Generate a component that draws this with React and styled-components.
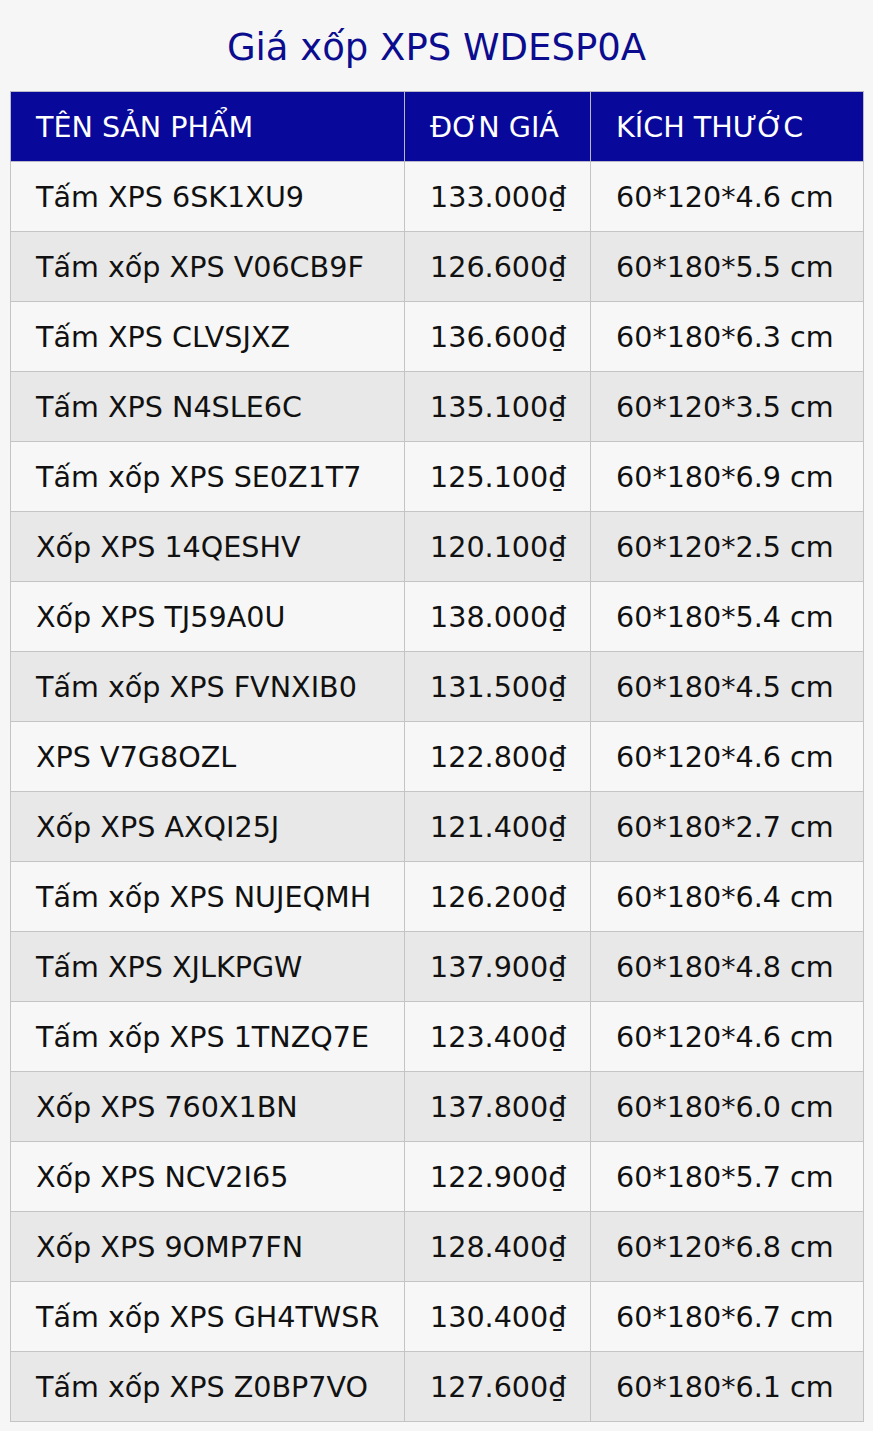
import React from 'react'
import styled, { createGlobalStyle } from 'styled-components'

const GlobalStyle = createGlobalStyle`
  html, body {
    margin: 0;
    padding: 0;
    background: #f6f6f6;
  }
  body {
    font-family: "DejaVu Sans", "Liberation Sans", sans-serif;
  }
`

const Page = styled.div`
  padding: 0 10px 10px 10px;
  min-height: 1431px;
  box-sizing: border-box;
`

const Title = styled.h1`
  margin: 0;
  height: 91px;
  display: flex;
  align-items: center;
  justify-content: center;
  padding-top: 4px;
  box-sizing: border-box;
  font-size: 37px;
  font-weight: normal;
  color: #0c0c8f;
`

const Table = styled.table`
  width: 853px;
  border-collapse: collapse;
  table-layout: fixed;
  font-size: 28.6px;
`

const Head = styled.th`
  background: #08089a;
  color: #fff;
  font-weight: normal;
  text-align: left;
  height: 70px;
  padding: 0 0 0 25px;
  border: 1px solid #b8b8c8;
  box-sizing: border-box;
  white-space: nowrap;
`

const Row = styled.tr`
  background: ${({ odd }) => (odd ? '#e8e8e8' : '#f7f7f7')};
`

const Cell = styled.td`
  height: 70px;
  padding: 0 0 0 25px;
  border: 1px solid #c4c4c4;
  color: #111;
  white-space: nowrap;
  box-sizing: border-box;
`

const rows = [
  ['Tấm XPS 6SK1XU9', '133.000₫', '60*120*4.6 cm'],
  ['Tấm xốp XPS V06CB9F', '126.600₫', '60*180*5.5 cm'],
  ['Tấm XPS CLVSJXZ', '136.600₫', '60*180*6.3 cm'],
  ['Tấm XPS N4SLE6C', '135.100₫', '60*120*3.5 cm'],
  ['Tấm xốp XPS SE0Z1T7', '125.100₫', '60*180*6.9 cm'],
  ['Xốp XPS 14QESHV', '120.100₫', '60*120*2.5 cm'],
  ['Xốp XPS TJ59A0U', '138.000₫', '60*180*5.4 cm'],
  ['Tấm xốp XPS FVNXIB0', '131.500₫', '60*180*4.5 cm'],
  ['XPS V7G8OZL', '122.800₫', '60*120*4.6 cm'],
  ['Xốp XPS AXQI25J', '121.400₫', '60*180*2.7 cm'],
  ['Tấm xốp XPS NUJEQMH', '126.200₫', '60*180*6.4 cm'],
  ['Tấm XPS XJLKPGW', '137.900₫', '60*180*4.8 cm'],
  ['Tấm xốp XPS 1TNZQ7E', '123.400₫', '60*120*4.6 cm'],
  ['Xốp XPS 760X1BN', '137.800₫', '60*180*6.0 cm'],
  ['Xốp XPS NCV2I65', '122.900₫', '60*180*5.7 cm'],
  ['Xốp XPS 9OMP7FN', '128.400₫', '60*120*6.8 cm'],
  ['Tấm xốp XPS GH4TWSR', '130.400₫', '60*180*6.7 cm'],
  ['Tấm xốp XPS Z0BP7VO', '127.600₫', '60*180*6.1 cm'],
]

export default function App() {
  return (
    <>
      <GlobalStyle />
      <Page>
        <Title>Giá xốp XPS WDESP0A</Title>
        <Table>
          <colgroup>
            <col style={{ width: 394 }} />
            <col style={{ width: 186 }} />
            <col style={{ width: 273 }} />
          </colgroup>
          <thead>
            <tr>
              <Head>TÊN SẢN PHẨM</Head>
              <Head>ĐƠN GIÁ</Head>
              <Head>KÍCH THƯỚC</Head>
            </tr>
          </thead>
          <tbody>
            {rows.map((r, i) => (
              <Row key={i} odd={i % 2 === 1}>
                <Cell>{r[0]}</Cell>
                <Cell>{r[1]}</Cell>
                <Cell>{r[2]}</Cell>
              </Row>
            ))}
          </tbody>
        </Table>
      </Page>
    </>
  )
}
